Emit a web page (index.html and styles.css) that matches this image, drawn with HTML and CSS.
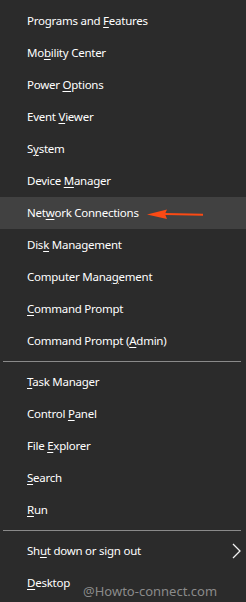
FILE: index.html
```
<!DOCTYPE html>
<html>
<head>
<meta charset="utf-8">
<link rel="stylesheet" href="styles.css">
</head>
<body>
<div class="menu">
  <div class="group">
    <div class="item">Programs and <u>F</u>eatures</div>
    <div class="item">Mo<u>b</u>ility Center</div>
    <div class="item">Power <u>O</u>ptions</div>
    <div class="item">Event <u>V</u>iewer</div>
    <div class="item">S<u>y</u>stem</div>
    <div class="item">Device <u>M</u>anager</div>
    <div class="item active">Net<u>w</u>ork Connections
      <svg class="arrow" width="60" height="12" viewBox="0 0 60 12">
        <polygon points="0,5.5 20,0.5 18,5 20,10" fill="#fa4a14"/>
        <path d="M18 5 L56 5.8" stroke="#fa4a14" stroke-width="2" fill="none"/>
      </svg>
    </div>
    <div class="item">Dis<u>k</u> Management</div>
    <div class="item">Computer Mana<u>g</u>ement</div>
    <div class="item"><u>C</u>ommand Prompt</div>
    <div class="item">Command Prompt (<u>A</u>dmin)</div>
  </div>
  <div class="sep"></div>
  <div class="group">
    <div class="item"><u>T</u>ask Manager</div>
    <div class="item">Control <u>P</u>anel</div>
    <div class="item">File <u>E</u>xplorer</div>
    <div class="item"><u>S</u>earch</div>
    <div class="item"><u>R</u>un</div>
  </div>
  <div class="sep"></div>
  <div class="group">
    <div class="item sub">Sh<u>u</u>t down or sign out
      <svg class="chev" width="10" height="16" viewBox="0 0 10 16">
        <polyline points="1,1 8,8 1,15" fill="none" stroke="#f2f2f2" stroke-width="1.3"/>
      </svg>
    </div>
    <div class="item"><u>D</u>esktop</div>
  </div>
  <div class="watermark">@Howto-connect.com</div>
</div>
</body>
</html>
```
FILE: styles.css
```
html, body {
  margin: 0;
  padding: 0;
  background: #2b2b2b;
}
.menu {
  position: relative;
  width: 246px;
  height: 602px;
  padding-top: 5px;
  box-sizing: border-box;
  background: #2b2b2b;
  font-family: "Noto Sans", "Open Sans", sans-serif;
  font-size: 11.5px;
  letter-spacing: -0.25px;
  color: #ffffff;
}
.item {
  position: relative;
  height: 32px;
  line-height: 32px;
  padding-left: 27px;
  white-space: nowrap;
}
.item u {
  text-decoration: underline;
  text-underline-offset: 2px;
}
.item.active {
  background: #414141;
}
.sep {
  height: 1px;
  margin: 4px 5px 4px 3px;
  background: #8a8a8a;
}
.arrow {
  position: absolute;
  left: 147px;
  top: 12px;
}
.chev {
  position: absolute;
  left: 232px;
  top: 8px;
}
.watermark {
  position: absolute;
  left: 83px;
  top: 582px;
  font-size: 13px;
  letter-spacing: 0;
  line-height: 18px;
  color: #8a8a8a;
}
```
